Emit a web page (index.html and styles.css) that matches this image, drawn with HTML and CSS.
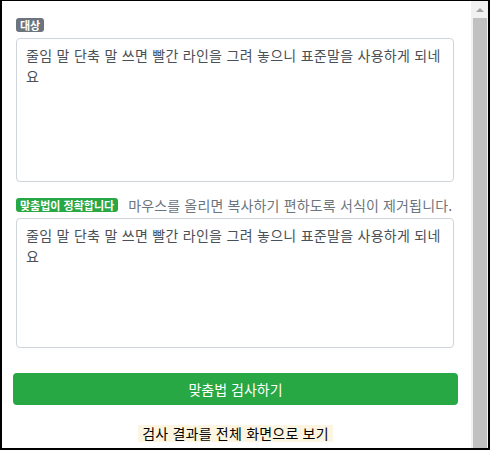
FILE: index.html
```html
<!DOCTYPE html>
<html lang="ko">
<head>
<meta charset="utf-8">
<link rel="stylesheet" href="styles.css">
</head>
<body>
<div class="frame">
  <main class="content">
    <div class="label-row">
      <span class="badge badge-grey">대상</span>
    </div>
    <textarea class="field field-tall" wrap="off">줄임 말 단축 말 쓰면 빨간 라인을 그려 놓으니 표준말을 사용하게 되네
요</textarea>
    <div class="label-row label-row-second">
      <span class="badge badge-green">맞춤법이 정확합니다</span>
      <span class="hint">마우스를 올리면 복사하기 편하도록 서식이 제거됩니다.</span>
    </div>
    <textarea class="field field-short" wrap="off">줄임 말 단축 말 쓰면 빨간 라인을 그려 놓으니 표준말을 사용하게 되네
요</textarea>
    <button class="check-btn" type="button">맞춤법 검사하기</button>
    <div class="full-row"><span class="full-link">검사 결과를 전체 화면으로 보기</span></div>
  </main>
  <div class="scrollbar">
    <div class="arrow"></div>
    <div class="thumb"></div>
  </div>
</div>
</body>
</html>
```
FILE: styles.css
```css
html, body {
  margin: 0;
  padding: 0;
  background: #fff;
}
.frame {
  width: 490px;
  height: 450px;
  box-sizing: border-box;
  border: 2px solid #000;
  border-top-width: 1px;
  display: flex;
  overflow: hidden;
  font-family: "Noto Sans CJK KR", "Noto Sans", sans-serif;
}
.content {
  flex: 1;
  padding: 14px 13px 0 11px;
  display: flex;
  flex-direction: column;
  min-width: 0;
}
.label-row {
  height: 20px;
  display: flex;
  align-items: center;
  margin: 0 0 3px 3px;
}
.label-row-second {
  margin-top: 13px;
}
.badge {
  display: inline-block;
  height: 14px;
  line-height: 14px;
  padding: 0 4px;
  border-radius: 3px;
  color: #fff;
  font-size: 11px;
  font-weight: 700;
}
.badge-grey { background: #6c757d; }
.badge-green { background: #28a745; }
.hint {
  margin-left: 10px;
  color: #6c757d;
  font-size: 14px;
  letter-spacing: 0.15px;
  white-space: nowrap;
}
.field {
  display: block;
  margin: 0 4px 0 3px;
  box-sizing: border-box;
  border: 1px solid #ced4da;
  border-radius: 4px;
  padding: 6px 9px;
  font-family: inherit;
  font-size: 14px;
  letter-spacing: 0.28px;
  line-height: 21px;
  color: #495057;
  resize: none;
  overflow: hidden;
  background: #fff;
}
.field-tall { height: 144px; }
.field-short { height: 130px; }
.check-btn {
  margin-top: 25px;
  height: 32px;
  border: none;
  border-radius: 4px;
  background: #28a745;
  color: #fff;
  font-family: inherit;
  font-size: 14px;
  padding: 0;
}
.full-row {
  margin-top: 15px;
  text-align: center;
}
.full-link {
  background: #fcf5e1;
  color: #000;
  font-size: 14px;
  letter-spacing: 0.2px;
  line-height: 17px;
  display: inline-block;
  padding: 0 4px;
}
.scrollbar {
  width: 17px;
  background: #f1f1f1;
  display: flex;
  flex-direction: column;
  align-items: center;
}
.arrow {
  margin-top: 7px;
  width: 0;
  height: 0;
  border-left: 4px solid transparent;
  border-right: 4px solid transparent;
  border-bottom: 4px solid #a3a3a3;
}
.thumb {
  margin-top: 6px;
  width: 14px;
  flex: 1;
  background: #c1c1c1;
}
```
